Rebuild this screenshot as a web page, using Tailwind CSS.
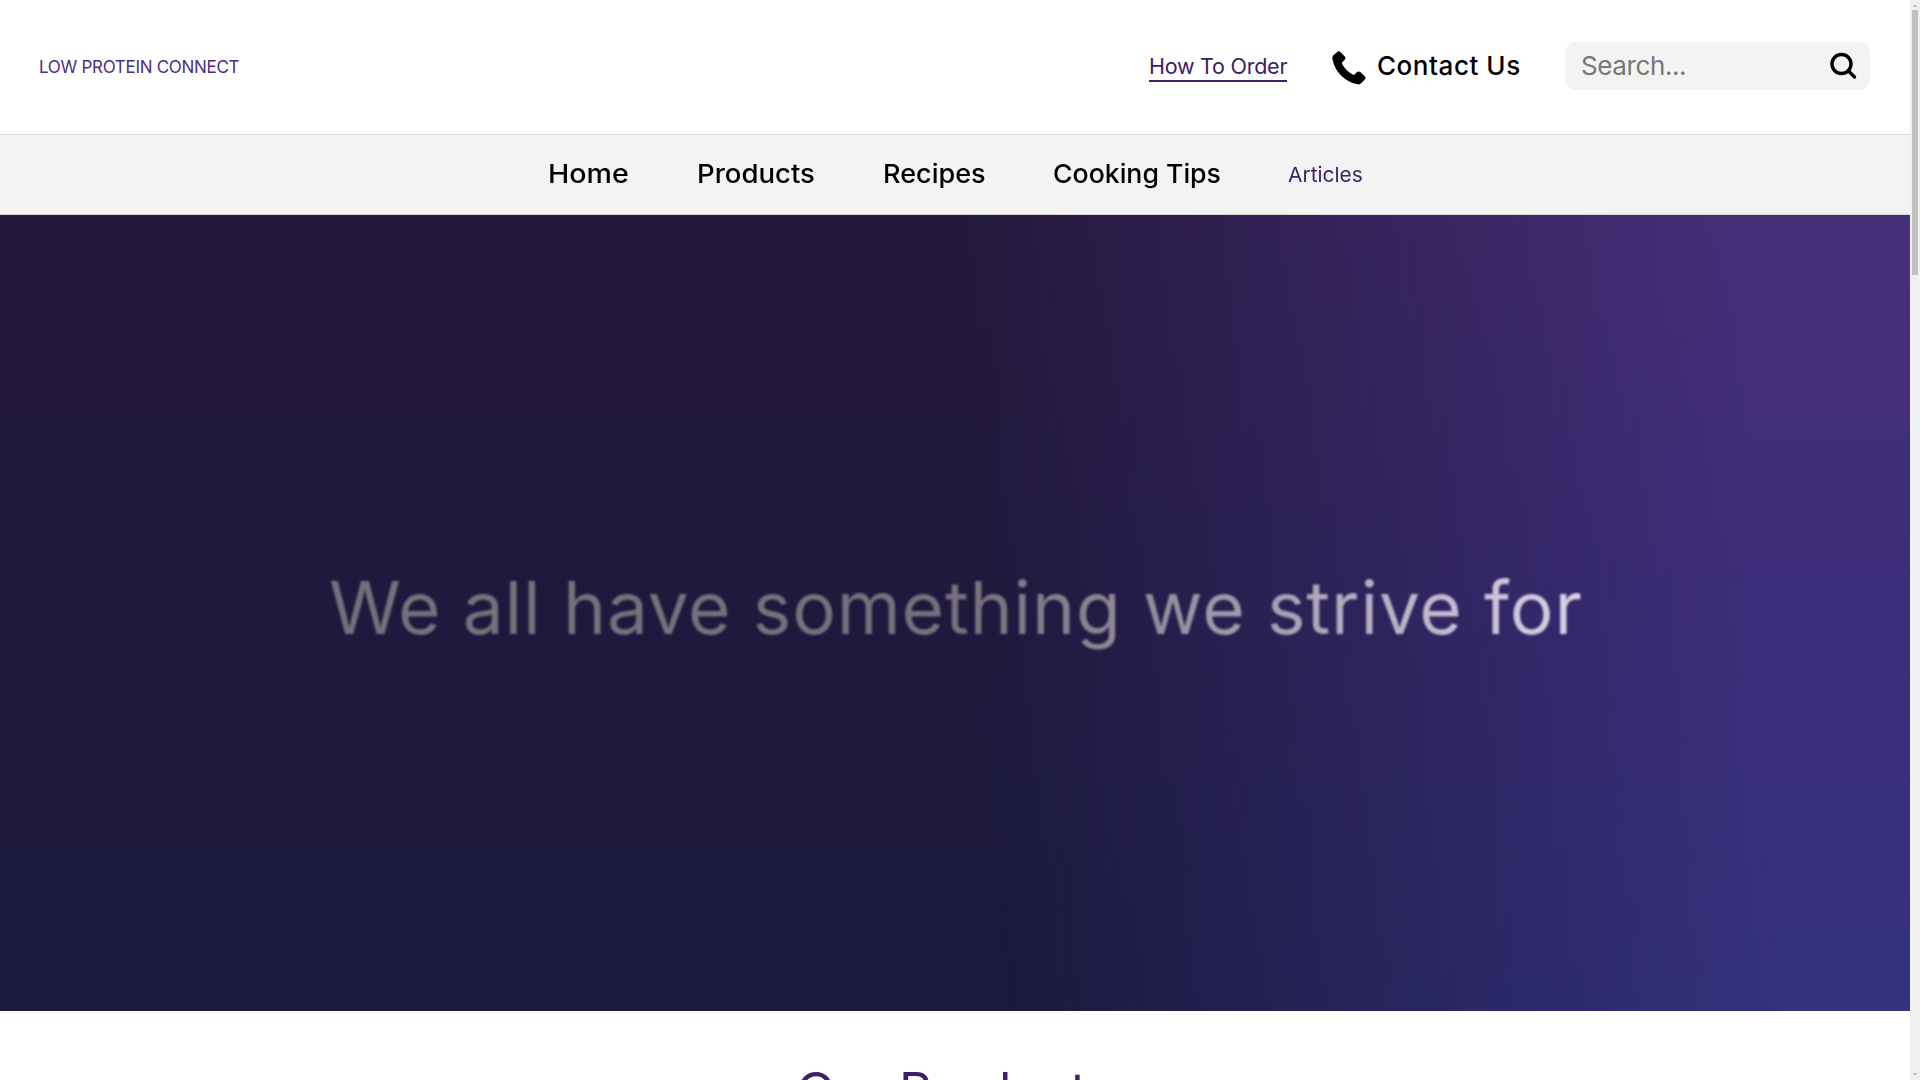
<!DOCTYPE html>
<html lang="en">
<head>
  <meta charset="UTF-8" />
  <meta name="viewport" content="width=device-width, initial-scale=1.0" />
  <title>Low Protein Connect</title>
  <script src="https://cdn.jsdelivr.net/npm/@tailwindcss/browser@4"></script>
</head>
<body class="flex h-screen overflow-hidden bg-white font-['Inter',sans-serif] text-black">
  <div class="flex w-[1910px] shrink-0 flex-col">
    <header class="flex h-[135px] shrink-0 items-center border-b border-[#d6d6d6] pl-[39px] pr-10 pb-0.5">
      <a href="#" class="mr-auto mt-0.5 whitespace-nowrap text-[17px] leading-6 tracking-[-0.3px] text-[#4b2e83]">LOW PROTEIN CONNECT</a>
      <a href="#" class="mr-[45px] mt-0.5 w-[138px] whitespace-nowrap border-b-2 border-[#3d2066] text-[21.5px] leading-7 tracking-[-0.25px] text-[#3d2066]">How To Order</a>
      <a href="#" class="mr-[44px] flex w-[189px] items-center gap-[11px] text-[26px] font-medium leading-8 tracking-[0.55px]">
        <svg class="mt-[3px] size-[34px] shrink-0" viewBox="0 0 34 34" fill="currentColor"><path d="M5.5.7C6.5.1 7.6.1 8.4.9L12.8 5.6C13.7 6.6 13.6 7.9 12.7 8.8L10.5 11C9.9 11.7 9.9 12.5 10.3 13.3C12.5 17.3 16.3 21.2 20.5 23.5C21.3 23.9 22.2 23.8 22.8 23.2L25 21.1C26 20.2 27.3 20.2 28.3 21.1L32.8 25.3C33.7 26.2 33.7 27.3 33 28.2L29.2 32.3C28.2 33.3 26.9 33.6 25.3 33.3C12.5 30.5 3 20.7.5 8.5C.1 6.5.4 5.3 1.5 4.3Z"/></svg>
        <span class="whitespace-nowrap">Contact Us</span>
      </a>
      <div class="flex h-12 w-[305px] items-center justify-between rounded-[11px] bg-[#f3f3f3] pl-4 pr-[13px]">
        <span class="whitespace-nowrap text-[26px] leading-8 tracking-[-0.4px] text-[#777]">Search...</span>
        <svg class="size-7" viewBox="0 0 28 28" fill="none" stroke="currentColor" stroke-width="3.4" stroke-linecap="round"><circle cx="12.5" cy="12" r="9.5"/><path d="M19.5 19L25.5 25"/></svg>
      </div>
    </header>

    <nav class="flex h-20 shrink-0 items-center justify-center gap-[68px] whitespace-nowrap border-b border-[#d6d6d6] bg-[#f3f3f3] pb-0.5 pl-0.5 text-[26px] font-medium leading-8">
      <a href="#" class="w-[81px] origin-left scale-x-[1.1]">Home</a>
      <a href="#" class="w-[118px] origin-left scale-x-[1.06]">Products</a>
      <a href="#" class="w-[102px] origin-left scale-x-[1.04]">Recipes</a>
      <a href="#" class="w-[168px] origin-left scale-x-[1.025]">Cooking Tips</a>
      <a href="#" class="-ml-px w-[76px] origin-left scale-x-[1.02] pt-0.5 text-[20.5px] font-normal text-[#3d2066]">Articles</a>
    </nav>

    <section class="grid h-[796px] shrink-0 bg-linear-to-b from-[#23183b] to-[#1a1a3e]">
      <div class="col-start-1 row-start-1 bg-linear-to-b from-[#472e78] via-[#3e2e7b] via-45% to-[#35327f] [mask-image:linear-gradient(85deg,transparent_51%,black_91%)]"></div>
      <p class="col-start-1 row-start-1 ml-[329px] mt-[345px] h-24 w-[1270px] whitespace-nowrap bg-linear-to-r from-[#77707c] from-50% to-[#ddd5ec] to-100% bg-clip-text text-[73px] font-normal leading-24 tracking-[0.82px] text-transparent blur-[0.8px]">We all have something we strive for</p>
    </section>

    <section class="shrink-0 pt-[49px]">
      <h2 class="scale-x-[1.06] text-center text-[48px] leading-[60px] text-[#3d2066]">Our Products</h2>
    </section>
  </div>

  <!-- scrollbar -->
  <div class="flex h-screen w-2.5 shrink-0 flex-col items-center bg-[#f0f0f0]">
    <svg class="h-2.5 w-1.5 shrink-0" viewBox="0 0 6 10" fill="#c0c0c0"><path d="M1 6h4v1H1zM2 5h2v1H2z"/></svg>
    <div class="h-[265px] w-1.5 shrink-0 bg-[#c0c0c0]"></div>
    <svg class="mt-auto h-2.5 w-1.5 shrink-0" viewBox="0 0 6 10" fill="#c0c0c0"><path d="M1 3h4v1H1zM2 4h2v1H2z"/></svg>
  </div>
</body>
</html>
